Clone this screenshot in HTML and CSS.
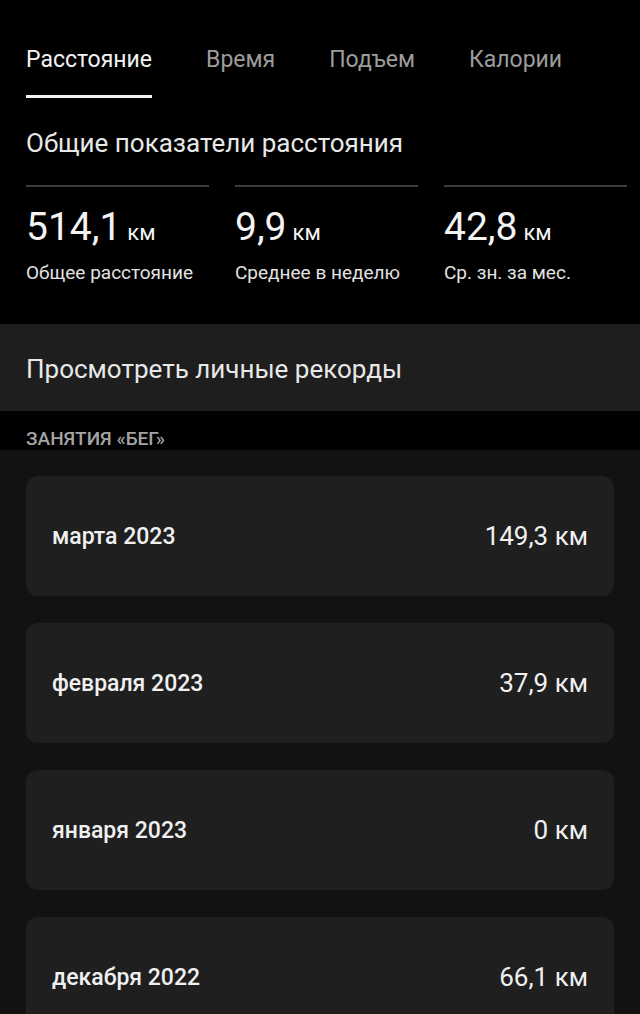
FILE: index.html
```html
<!DOCTYPE html>
<html lang="ru">
<head>
    <meta charset="UTF-8">
    <meta name="viewport" content="width=device-width, initial-scale=1.0">
    <title>Статистика</title>
    <link rel="stylesheet" href="styles.css">
</head>
<body>
    <nav class="tabs">
        <a class="tab active" href="#">Расстояние</a>
        <a class="tab" href="#">Время</a>
        <a class="tab" href="#">Подъем</a>
        <a class="tab" href="#">Калории</a>
    </nav>

    <section class="totals">
        <h2 class="totals-title">Общие показатели расстояния</h2>
        <div class="stats">
            <div class="stat">
                <div class="stat-value">514,1<span class="unit">км</span></div>
                <div class="stat-label">Общее расстояние</div>
            </div>
            <div class="stat">
                <div class="stat-value">9,9<span class="unit">км</span></div>
                <div class="stat-label">Среднее в неделю</div>
            </div>
            <div class="stat">
                <div class="stat-value">42,8<span class="unit">км</span></div>
                <div class="stat-label">Ср. зн. за мес.</div>
            </div>
        </div>
    </section>

    <a class="records" href="#">Просмотреть личные рекорды</a>

    <div class="section-label">ЗАНЯТИЯ «БЕГ»</div>

    <div class="months">
        <div class="month-card">
            <span class="month-name">марта 2023</span>
            <span class="month-value">149,3 км</span>
        </div>
        <div class="month-card">
            <span class="month-name">февраля 2023</span>
            <span class="month-value">37,9 км</span>
        </div>
        <div class="month-card">
            <span class="month-name">января 2023</span>
            <span class="month-value">0 км</span>
        </div>
        <div class="month-card">
            <span class="month-name">декабря 2022</span>
            <span class="month-value">66,1 км</span>
        </div>
    </div>
</body>
</html>
```

FILE: styles.css
```css
body {
    font-family: Roboto, "Noto Sans", Arial, sans-serif;
    margin: 0;
    padding: 0;
    background-color: #000;
    color: #ececec;
    height: 1014px;
    overflow: hidden;
}
.tabs {
    display: flex;
    gap: 54px;
    padding: 0 26px;
}
.tab {
    color: #9c9c9c;
    text-decoration: none;
    font-size: 23px;
    line-height: 28px;
    padding: 46px 0 21px;
    border-bottom: 3px solid transparent;
}
.tab.active {
    color: #f2f2f2;
    border-bottom-color: #f2f2f2;
}
.totals {
    padding: 30px 13px 39px 26px;
}
.totals-title {
    margin: 0;
    font-size: 26px;
    font-weight: 400;
    line-height: 30px;
    color: #e8e8e8;
}
.stats {
    display: grid;
    grid-template-columns: repeat(3, 1fr);
    gap: 26px;
    margin-top: 27px;
}
.stat {
    border-top: 2px solid #3c3c3c;
    padding-top: 17px;
}
.stat-value {
    font-size: 39px;
    line-height: 46px;
    color: #f4f4f4;
}
.unit {
    font-size: 22px;
    margin-left: 6px;
}
.stat-label {
    font-size: 19px;
    line-height: 24px;
    margin-top: 5px;
    color: #e2e2e2;
}
.records {
    display: block;
    background-color: #1e1e1e;
    color: #e8e8e8;
    text-decoration: none;
    font-size: 26px;
    line-height: 30px;
    padding: 30px 26px 27px;
}
.section-label {
    font-size: 19px;
    font-weight: 500;
    line-height: 22px;
    color: #a4a4a4;
    padding: 17px 26px 0;
}
.months {
    background-color: #121212;
    padding: 26px;
    display: flex;
    flex-direction: column;
    gap: 27px;
}
.month-card {
    background-color: #1f1f1f;
    border-radius: 12px;
    height: 120px;
    padding: 0 26px;
    display: flex;
    align-items: center;
    justify-content: space-between;
}
.month-name {
    font-size: 23px;
    font-weight: 500;
    color: #f0f0f0;
}
.month-value {
    font-size: 26px;
    color: #f0f0f0;
}
```
